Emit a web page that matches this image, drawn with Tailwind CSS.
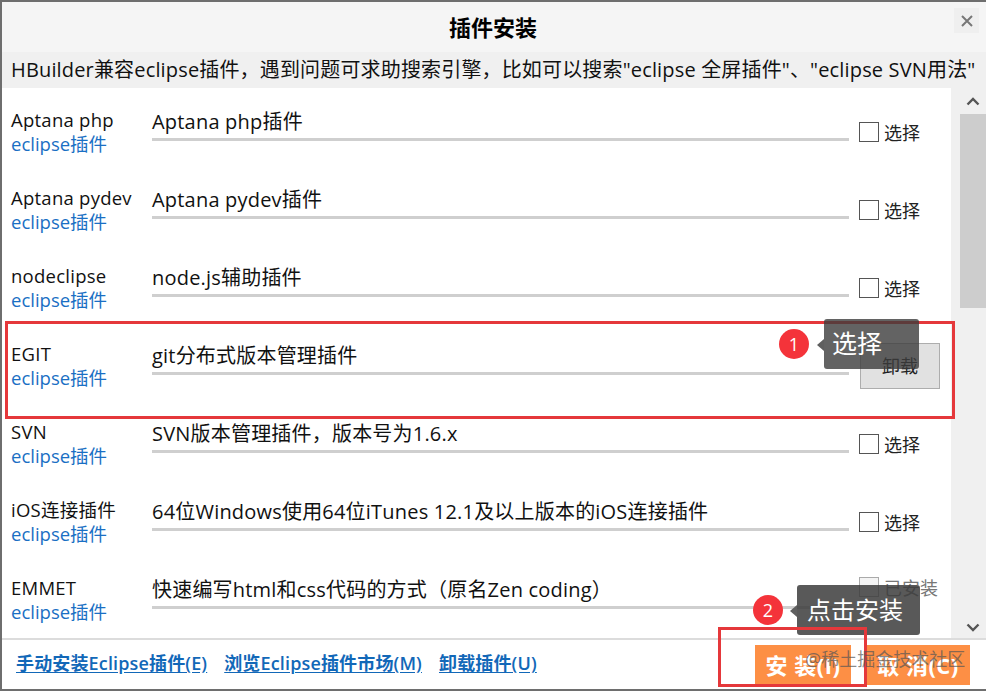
<!DOCTYPE html>
<html lang="zh">
<head>
<meta charset="utf-8">
<title>插件安装</title>
<script src="https://cdn.jsdelivr.net/npm/@tailwindcss/browser@4"></script>
</head>
<body class="m-0 bg-white">
<div class="relative w-[986px] h-[691px] overflow-hidden border-2 border-[#6e6e6e] border-r-0 border-b-[2px] flex flex-col font-['Open_Sans','Noto_Sans_CJK_SC',sans-serif] text-[#111]">

  <!-- Title -->
  <div class="h-[50px] shrink-0 bg-[#f5f5f5] flex items-center justify-center relative">
    <h1 class="text-[22px] font-bold text-black -ml-[2px]">插件安装</h1>
    <span class="absolute right-[7px] top-[6px] w-[25px] h-[25px] bg-[#efefef] flex items-center justify-center">
      <svg width="12" height="12" viewBox="0 0 12 12"><path d="M1 1 L11 11 M11 1 L1 11" stroke="#777" stroke-width="2" fill="none"/></svg>
    </span>
  </div>

  <!-- Notice -->
  <div class="h-[36px] shrink-0 bg-[#f0f0f0] flex items-center pl-[9px] text-[20px] tracking-[0.16px] whitespace-nowrap text-[#111]">
    HBuilder兼容eclipse插件，遇到问题可求助搜索引擎，比如可以搜索"eclipse 全屏插件"、"eclipse SVN用法"
  </div>

  <!-- List + scrollbar -->
  <div class="flex h-[550px] shrink-0">
    <div class="w-[949px] overflow-hidden bg-white pt-[21px]">

      <div class="h-[78px] flex">
        <div class="w-[150px] pl-[9px] text-[18.5px] leading-[24px] -mt-[1px] whitespace-nowrap"><p class="tracking-[0.25px]">Aptana php</p><p class="text-[#1a6fc4]">eclipse插件</p></div>
        <div class="w-[697px]"><p class="text-[20px] tracking-[0.2px] leading-[26px] h-[29px] whitespace-nowrap">Aptana php插件</p><div class="h-[3px] bg-[#cfcfcf]"></div></div>
        <label class="ml-[10px] h-[40px] mt-[12px] flex items-start gap-[5px] text-[18px] leading-[24px] text-[#222]"><span class="w-[20px] h-[20px] mt-[1px] border border-[#555] bg-white"></span>选择</label>
      </div>

      <div class="h-[78px] flex">
        <div class="w-[150px] pl-[9px] text-[18.5px] leading-[24px] -mt-[1px] whitespace-nowrap"><p class="tracking-[0.25px]">Aptana pydev</p><p class="text-[#1a6fc4]">eclipse插件</p></div>
        <div class="w-[697px]"><p class="text-[20px] tracking-[0.2px] leading-[26px] h-[29px] whitespace-nowrap">Aptana pydev插件</p><div class="h-[3px] bg-[#cfcfcf]"></div></div>
        <label class="ml-[10px] h-[40px] mt-[12px] flex items-start gap-[5px] text-[18px] leading-[24px] text-[#222]"><span class="w-[20px] h-[20px] mt-[1px] border border-[#555] bg-white"></span>选择</label>
      </div>

      <div class="h-[78px] flex">
        <div class="w-[150px] pl-[9px] text-[18.5px] leading-[24px] -mt-[1px] whitespace-nowrap"><p class="tracking-[0.25px]">nodeclipse</p><p class="text-[#1a6fc4]">eclipse插件</p></div>
        <div class="w-[697px]"><p class="text-[20px] tracking-[0.2px] leading-[26px] h-[29px] whitespace-nowrap">node.js辅助插件</p><div class="h-[3px] bg-[#cfcfcf]"></div></div>
        <label class="ml-[10px] h-[40px] mt-[12px] flex items-start gap-[5px] text-[18px] leading-[24px] text-[#222]"><span class="w-[20px] h-[20px] mt-[1px] border border-[#555] bg-white"></span>选择</label>
      </div>

      <div class="h-[78px] flex">
        <div class="w-[150px] pl-[9px] text-[18.5px] leading-[24px] -mt-[1px] whitespace-nowrap"><p class="tracking-[0.25px]">EGIT</p><p class="text-[#1a6fc4]">eclipse插件</p></div>
        <div class="w-[697px]"><p class="text-[20px] tracking-[0.2px] leading-[26px] h-[29px] whitespace-nowrap">git分布式版本管理插件</p><div class="h-[3px] bg-[#cfcfcf]"></div></div>
        <button class="ml-[11px] w-[80px] h-[46px] bg-[#e1e1e1] border border-[#adadad] text-[18px] text-[#222]">卸载</button>
      </div>

      <div class="h-[78px] flex">
        <div class="w-[150px] pl-[9px] text-[18.5px] leading-[24px] -mt-[1px] whitespace-nowrap"><p class="tracking-[0.25px]">SVN</p><p class="text-[#1a6fc4]">eclipse插件</p></div>
        <div class="w-[697px]"><p class="text-[20px] tracking-[0.2px] leading-[26px] h-[29px] whitespace-nowrap">SVN版本管理插件，版本号为1.6.x</p><div class="h-[3px] bg-[#cfcfcf]"></div></div>
        <label class="ml-[10px] h-[40px] mt-[12px] flex items-start gap-[5px] text-[18px] leading-[24px] text-[#222]"><span class="w-[20px] h-[20px] mt-[1px] border border-[#555] bg-white"></span>选择</label>
      </div>

      <div class="h-[78px] flex">
        <div class="w-[150px] pl-[9px] text-[18.5px] leading-[24px] -mt-[1px] whitespace-nowrap"><p class="tracking-[0.25px]">iOS连接插件</p><p class="text-[#1a6fc4]">eclipse插件</p></div>
        <div class="w-[697px]"><p class="text-[20px] tracking-[0.2px] leading-[26px] h-[29px] whitespace-nowrap">64位Windows使用64位iTunes 12.1及以上版本的iOS连接插件</p><div class="h-[3px] bg-[#cfcfcf]"></div></div>
        <label class="ml-[10px] h-[40px] mt-[12px] flex items-start gap-[5px] text-[18px] leading-[24px] text-[#222]"><span class="w-[20px] h-[20px] mt-[1px] border border-[#555] bg-white"></span>选择</label>
      </div>

      <div class="h-[78px] flex">
        <div class="w-[150px] pl-[9px] text-[18.5px] leading-[24px] -mt-[1px] whitespace-nowrap"><p class="tracking-[0.25px]">EMMET</p><p class="text-[#1a6fc4]">eclipse插件</p></div>
        <div class="w-[697px]"><p class="text-[20px] tracking-[0.2px] leading-[26px] h-[29px] whitespace-nowrap">快速编写html和css代码的方式（原名Zen coding）</p><div class="h-[3px] bg-[#cfcfcf]"></div></div>
        <label class="ml-[10px] h-[40px] mt-[-1px] flex items-start gap-[5px] text-[18px] leading-[24px] text-[#777]"><span class="w-[20px] h-[20px] mt-[1px] border border-[#aaa] bg-[#f4f4f4]"></span>已安装</label>
      </div>
    </div>

    <!-- Scrollbar -->
    <div class="w-[35px] bg-[#f0f0f0] pl-[9px] flex flex-col">
      <div class="h-[26px] flex items-center justify-center">
        <svg width="14" height="9" viewBox="0 0 14 9"><path d="M1.5 7.5 L7 2 L12.5 7.5" stroke="#555" stroke-width="2.4" fill="none"/></svg>
      </div>
      <div class="h-[194px] bg-[#cdcdcd]"></div>
      <div class="flex-1 flex items-end justify-center pb-[6px]">
        <svg width="14" height="9" viewBox="0 0 14 9"><path d="M1.5 1.5 L7 7 L12.5 1.5" stroke="#555" stroke-width="2.4" fill="none"/></svg>
      </div>
    </div>
  </div>

  <!-- Footer -->
  <div class="flex-1 border-t-2 border-[#dcdcdc] bg-white flex items-start pl-[14px]">
    <div class="flex gap-[17px] pt-[10px] text-[18px] tracking-[0.15px] font-semibold text-[#1268b8] whitespace-nowrap">
      <a class="underline underline-offset-2">手动安装Eclipse插件(E)</a>
      <a class="underline underline-offset-2">浏览Eclipse插件市场(M)</a>
      <a class="underline underline-offset-2">卸载插件(U)</a>
    </div>
    <div class="ml-auto mr-[16px] mt-[5px] flex gap-[15px]">
      <button class="w-[96px] h-[40px] bg-[#fd8f45] text-white text-[22px] tracking-[0.5px] font-bold whitespace-nowrap">安 装(I)</button>
      <button class="w-[104px] h-[40px] bg-[#fd8f45] text-white text-[22px] tracking-[0.5px] font-bold whitespace-nowrap">取 消(C)</button>
    </div>
  </div>

  <!-- Annotations -->
  <div class="absolute left-[3px] top-[319px] w-[950px] h-[98px] border-[3px] border-[#e5383b]"></div>
  <div class="absolute left-[777px] top-[327px] w-[30px] h-[30px] rounded-full bg-[#f4333a] text-white text-[18px] flex items-center justify-center">1</div>
  <div class="absolute left-[815px] top-[337px] w-0 h-0 border-y-[6px] border-y-transparent border-r-[7px] border-r-[#5f5f5f]"></div>
  <div class="absolute left-[822px] top-[317px] w-[95px] h-[50px] rounded-[3px] bg-[#3c3c3c]/80 text-white text-[25px] flex items-center pl-[8px]">选择</div>

  <div class="absolute left-[751px] top-[593px] w-[30px] h-[30px] rounded-full bg-[#f4333a] text-white text-[18px] flex items-center justify-center">2</div>
  <div class="absolute left-[788px] top-[603px] w-0 h-0 border-y-[6px] border-y-transparent border-r-[7px] border-r-[#5f5f5f]"></div>
  <div class="absolute left-[795px] top-[583px] w-[123px] h-[50px] rounded-[3px] bg-[#3c3c3c]/85 text-white text-[24px] flex items-center pl-[10px]">点击安装</div>
  <div class="absolute left-[716px] top-[625px] w-[149px] h-[60px] border-[3px] border-[#e5383b]"></div>

  <!-- Watermark -->
  <div class="absolute left-[803px] top-[644px] text-[18px] text-[#555]/70 whitespace-nowrap">@稀土掘金技术社区</div>
</div>
</body>
</html>
